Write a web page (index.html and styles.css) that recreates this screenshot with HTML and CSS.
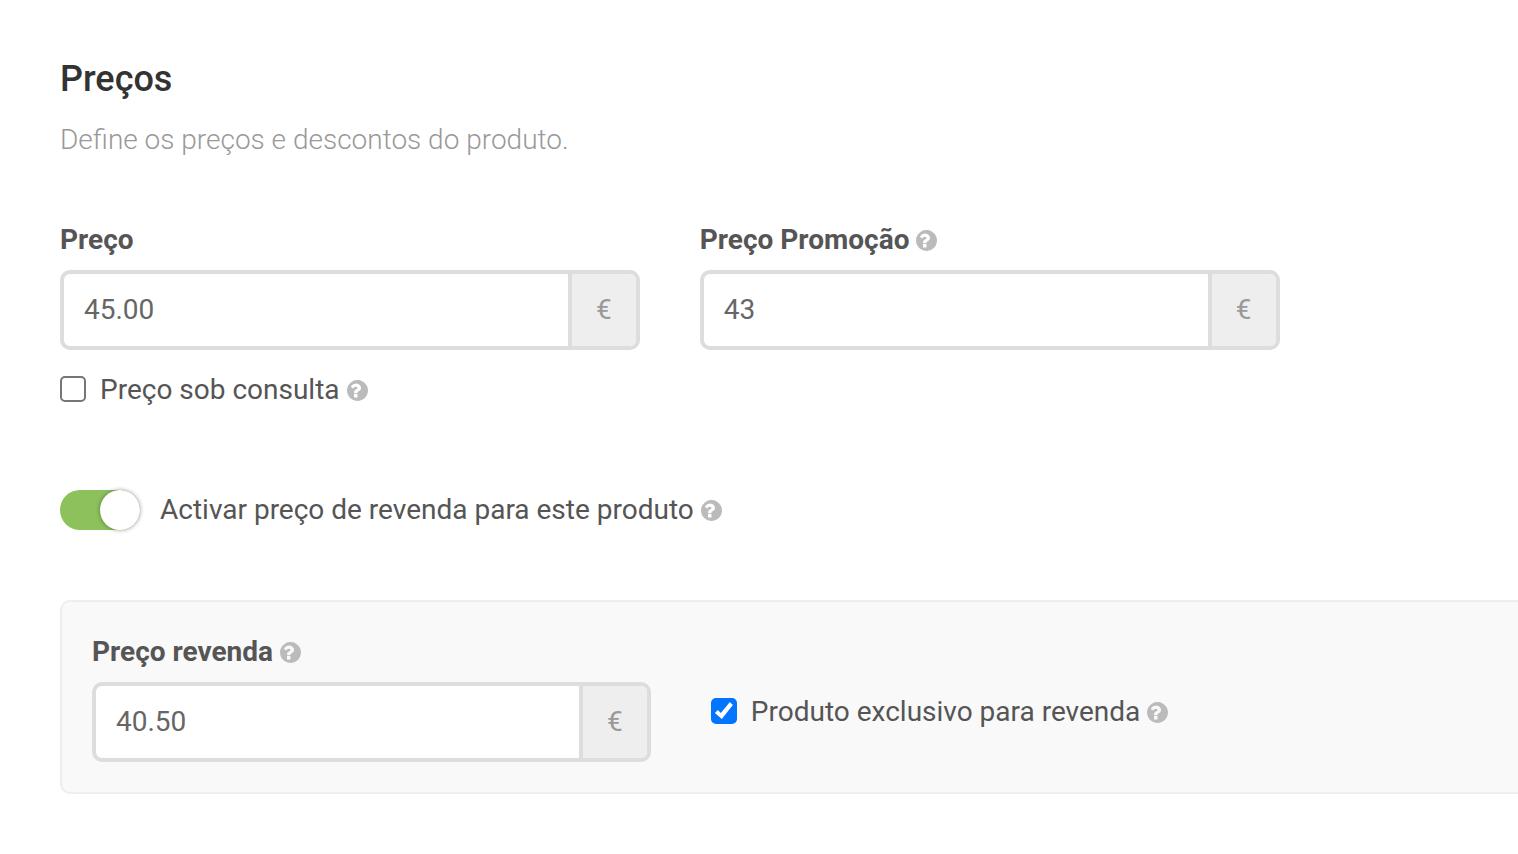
FILE: index.html
```html
<!DOCTYPE html>
<html lang="pt">
	<head>
		<meta charset="utf-8">
		<title>Preços</title>
		<link rel="stylesheet" href="styles.css">
	</head>

	<body>

		<svg class="sprite" aria-hidden="true">
			<symbol id="help" viewBox="128 128 1536 1536">
				<path d="M896 1376v-192q0-14-9-23t-23-9h-192q-14 0-23 9t-9 23v192q0 14 9 23t23 9h192q14 0 23-9t9-23zm256-672q0-88-55.5-163t-138.5-116-170-41q-243 0-371 213-15 24 8 42l132 100q7 6 19 6 16 0 25-12 53-68 86-92 34-24 86-24 48 0 85.500 26t37.500 59q0 38-20 61t-68 45q-63 28-115.500 86.500t-52.500 125.500v36q0 14 9 23t23 9h192q14 0 23-9t9-23q0-19 21.500-49.500t54.500-49.500q32-18 49-28.500t46-35 44.500-48 28-60.500 12.500-81zm512 192q0 209-103 385.500t-279.500 279.500-385.500 103-385.500-103-279.500-279.500-103-385.500 103-385.500 279.500-279.500 385.500-103 385.500 103 279.500 279.500 103 385.500z"/>
			</symbol>
		</svg>

		<form class="prices">
			<h2 class="title">Preços</h2>
			<p class="subtitle">Define os preços e descontos do produto.</p>

			<div class="row">
				<div class="field">
					<label class="fieldLabel" for="price">Preço</label>
					<div class="inputGroup">
						<input type="text" id="price" value="45.00">
						<span class="addon">€</span>
					</div>
					<label class="check">
						<input type="checkbox" class="checkbox">
						<span>Preço sob consulta</span>
						<svg class="help"><use href="#help"/></svg>
					</label>
				</div>
				<div class="field">
					<label class="fieldLabel" for="promo">Preço Promoção <svg class="help"><use href="#help"/></svg></label>
					<div class="inputGroup">
						<input type="text" id="promo" value="43">
						<span class="addon">€</span>
					</div>
				</div>
			</div>

			<label class="toggle">
				<input type="checkbox" class="switch" role="switch" checked>
				<span>Activar preço de revenda para este produto</span>
				<svg class="help"><use href="#help"/></svg>
			</label>

			<div class="panel">
				<div class="field">
					<label class="fieldLabel" for="resale">Preço revenda <svg class="help"><use href="#help"/></svg></label>
					<div class="inputGroup">
						<input type="text" id="resale" value="40.50">
						<span class="addon">€</span>
					</div>
				</div>
				<label class="check">
					<input type="checkbox" class="checkbox" checked>
					<span>Produto exclusivo para revenda</span>
					<svg class="help"><use href="#help"/></svg>
				</label>
			</div>
		</form>

	</body>
</html>
```
FILE: styles.css
```css
* {
	box-sizing: border-box;
	padding: 0;
	margin: 0;
}
body {
	background-color: #fff;
	color: #555;
	font: 400 28px/40px Roboto, "Liberation Sans", sans-serif;
}
.sprite {
	display: none;
}
.prices {
	padding: 59px 0 60px 60px;
}
.title {
	color: #333;
	font-size: 36px;
	font-weight: 500;
}
.subtitle {
	margin-top: 21px;
	color: #999;
	font-weight: 300;
}
.row {
	display: grid;
	grid-template-columns: 13fr 13fr 4fr;
	gap: 60px;
	margin-top: 60px;
}

/* fields */
.fieldLabel {
	display: flex;
	align-items: center;
	gap: 7px;
	margin-bottom: 10px;
	font-weight: 700;
}
.inputGroup {
	display: flex;
	height: 80px;
	border: 4px solid #ddd;
	border-radius: 10px;
	background-color: #fff;
	overflow: hidden;
}
.inputGroup input {
	flex: 1;
	min-width: 0;
	padding: 0 20px;
	border: 0;
	outline: 0;
	background: none;
	color: #666;
	font: inherit;
}
.addon {
	display: flex;
	align-items: center;
	justify-content: center;
	width: 68px;
	border-left: 4px solid #ddd;
	background-color: #eee;
	color: #999;
}
.help {
	flex: none;
	width: 21px;
	height: 21px;
	margin-top: 1px;
	fill: #bbb;
}

/* checkboxes */
.check,
.toggle {
	display: flex;
	align-items: center;
	width: fit-content;
}
.check {
	margin-top: 20px;
}
.check .help,
.toggle .help {
	margin-left: 7px;
}
.checkbox {
	appearance: none;
	flex: none;
	width: 26px;
	height: 26px;
	margin: 0 14px 2px 0;
	border: 2px solid #767676;
	border-radius: 5px;
	background-color: #fff;
}
.checkbox:checked {
	border-color: #0075ff;
	background-color: #0075ff;
}
.checkbox:checked::before {
	content: "";
	display: block;
	width: 22px;
	height: 22px;
	background-color: #fff;
	clip-path: polygon(2px 13px, 5px 10px, 8px 13px, 17px 2px, 20px 5px, 9px 19px);
}

/* on/off switch */
.toggle {
	margin-top: 80px;
}
.switch {
	appearance: none;
	flex: none;
	width: 80px;
	height: 40px;
	margin-right: 20px;
	border-radius: 20px;
	background-color: #ccc;
}
.switch::before {
	content: "";
	display: block;
	width: 40px;
	height: 40px;
	border-radius: 50%;
	background-color: #fff;
	box-shadow: 0 0 4px rgba(0, 0, 0, .4);
}
.switch:checked {
	background-color: #8dc15b;
}
.switch:checked::before {
	margin-left: auto;
}

/* resale box, runs off the right side */
.panel {
	display: grid;
	grid-template-columns: 3fr 3fr 1fr;
	gap: 60px;
	margin-top: 70px;
	padding: 30px 2px 30px 30px;
	border: 2px solid #eee;
	border-right: 0;
	border-radius: 10px 0 0 10px;
	background-color: #f9f9f9;
}
.panel .check {
	align-self: start;
	margin-top: 60px;
}
```
